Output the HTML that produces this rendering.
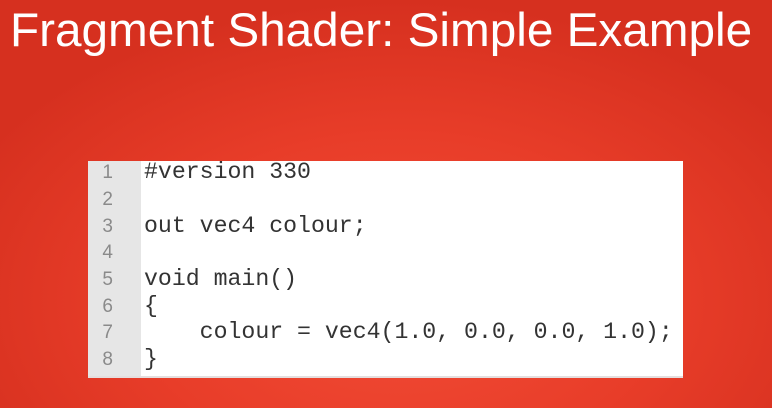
<!DOCTYPE html>
<html><head><style>
html,body{margin:0;padding:0}
body{width:772px;height:408px;overflow:hidden;position:relative;
background:radial-gradient(ellipse 480px 300px at 400px 300px,#f24c36 0%,#e83d29 55%,#d6301f 100%);}
.t{position:absolute;left:10px;top:4px;font-family:"Liberation Sans",sans-serif;font-size:47.7px;color:#fff;white-space:nowrap;line-height:54px}
.code{position:absolute;left:88px;top:161px;width:595px;height:215px;background:#fff;border-bottom:2px solid #e4dede}
.g{position:absolute;left:0;top:0;width:53px;height:100%;background:#e6e6e6}
.ln{position:absolute;left:0;width:25px;text-align:right;font-family:"Liberation Sans",sans-serif;font-size:19px;color:#8a8a8a;margin-top:1px}
.c{position:absolute;left:56px;font-family:"Liberation Mono",monospace;font-size:23.2px;color:#333;white-space:pre}
</style></head><body>
<div class="t">Fragment Shader: Simple Example</div>
<div class="code"><div class="g"></div>
<div class="ln" style="top:0px">1</div><div class="c" style="top:-2px">#version 330</div>
<div class="ln" style="top:27px">2</div>
<div class="ln" style="top:54px">3</div><div class="c" style="top:52px">out vec4 colour;</div>
<div class="ln" style="top:80px">4</div>
<div class="ln" style="top:107px">5</div><div class="c" style="top:105px">void main()</div>
<div class="ln" style="top:134px">6</div><div class="c" style="top:132px">{</div>
<div class="ln" style="top:160px">7</div><div class="c" style="top:158px">    colour = vec4(1.0, 0.0, 0.0, 1.0);</div>
<div class="ln" style="top:187px">8</div><div class="c" style="top:185px">}</div>
</div>
</body></html>
